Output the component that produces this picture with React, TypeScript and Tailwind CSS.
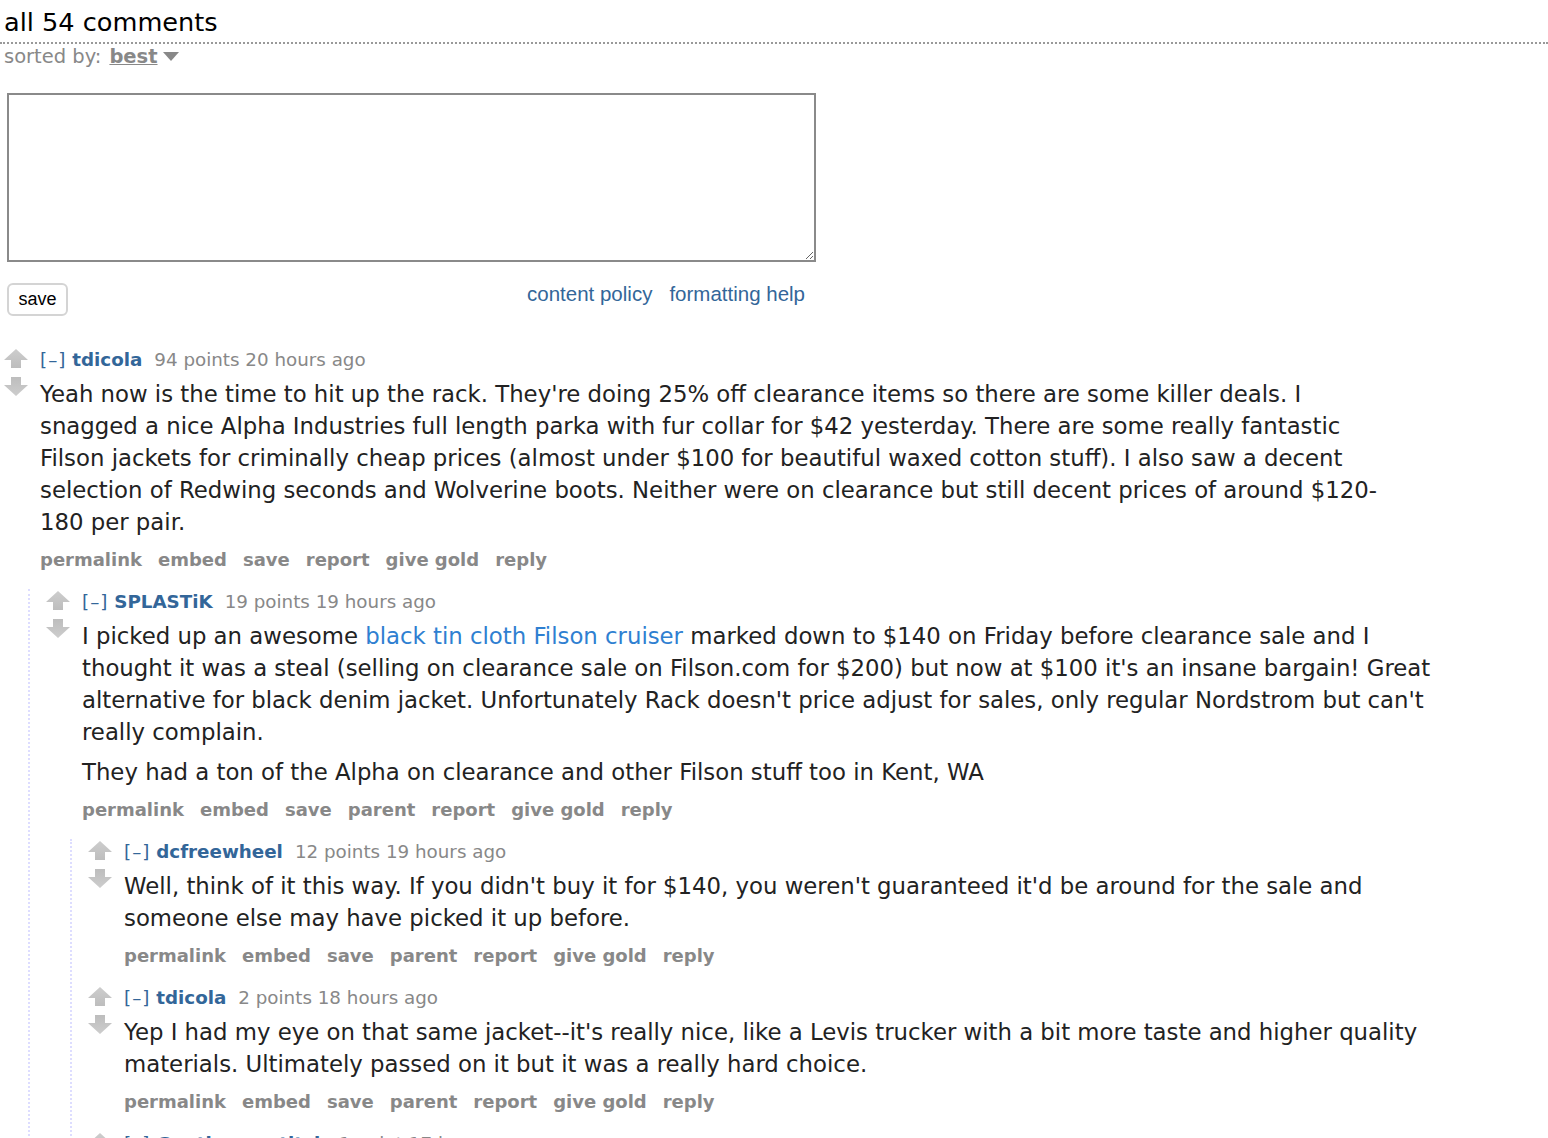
import { Fragment, ReactNode } from "react";

interface CommentData {
  author: string;
  points: string;
  time: string;
  // each paragraph is a list of rendered lines
  body: ReactNode[][];
  child?: boolean;
  replies?: CommentData[];
}

const comments: CommentData[] = [
  {
    author: "tdicola",
    points: "94 points",
    time: "20 hours ago",
    body: [
      [
        "Yeah now is the time to hit up the rack. They're doing 25% off clearance items so there are some killer deals. I",
        "snagged a nice Alpha Industries full length parka with fur collar for $42 yesterday. There are some really fantastic",
        "Filson jackets for criminally cheap prices (almost under $100 for beautiful waxed cotton stuff). I also saw a decent",
        "selection of Redwing seconds and Wolverine boots. Neither were on clearance but still decent prices of around $120-",
        "180 per pair.",
      ],
    ],
    replies: [
      {
        author: "SPLASTiK",
        points: "19 points",
        time: "19 hours ago",
        child: true,
        body: [
          [
            <>
              I picked up an awesome{" "}
              <a href="#" className="text-[#2f7fd1]">
                black tin cloth Filson cruiser
              </a>{" "}
              marked down to $140 on Friday before clearance sale and I
            </>,
            "thought it was a steal (selling on clearance sale on Filson.com for $200) but now at $100 it's an insane bargain! Great",
            "alternative for black denim jacket. Unfortunately Rack doesn't price adjust for sales, only regular Nordstrom but can't",
            "really complain.",
          ],
          ["They had a ton of the Alpha on clearance and other Filson stuff too in Kent, WA"],
        ],
        replies: [
          {
            author: "dcfreewheel",
            points: "12 points",
            time: "19 hours ago",
            child: true,
            body: [
              [
                "Well, think of it this way. If you didn't buy it for $140, you weren't guaranteed it'd be around for the sale and",
                "someone else may have picked it up before.",
              ],
            ],
          },
          {
            author: "tdicola",
            points: "2 points",
            time: "18 hours ago",
            child: true,
            body: [
              [
                "Yep I had my eye on that same jacket--it's really nice, like a Levis trucker with a bit more taste and higher quality",
                "materials. Ultimately passed on it but it was a really hard choice.",
              ],
            ],
          },
          {
            author: "Gentlemanstitch",
            points: "1 point",
            time: "17 hours ago",
            child: true,
            body: [["Thanks for the heads up, going to check mine out this weekend."]],
          },
        ],
      },
    ],
  },
];

function Arrow({ down = false }: { down?: boolean }) {
  return (
    <svg width="24" height="19" viewBox="0 0 24 19" className={down ? "rotate-180" : ""}>
      <defs>
        <linearGradient id={down ? "gd" : "gu"} x1="0" y1="0" x2="0" y2="1">
          <stop offset="0" stopColor="#cdcdcd" />
          <stop offset="1" stopColor="#bdbdbd" />
        </linearGradient>
      </defs>
      <polygon points="12,0 24,11 17,11 17,19 7,19 7,11 0,11" fill={`url(#${down ? "gd" : "gu"})`} />
    </svg>
  );
}

function Comment({ data }: { data: CommentData }) {
  const buttons = data.child
    ? ["permalink", "embed", "save", "parent", "report", "give gold", "reply"]
    : ["permalink", "embed", "save", "report", "give gold", "reply"];

  return (
    <div>
      <div className="flex">
        <div className="w-[40px] shrink-0 pl-[4px] pt-[2px] flex flex-col gap-[9px]">
          <Arrow />
          <Arrow down />
        </div>
        <div className="min-w-0">
          <p className="pt-[1px] text-[18.3px] leading-[24px] text-[#888] whitespace-nowrap">
            <span className="text-[#369] tracking-[1px]">[–]</span>{" "}
            <a href="#" className="font-bold text-[#369]">
              {data.author}
            </a>
            <span className="ml-[12px]">{data.points} {data.time}</span>
          </p>
          <div className="mt-[6px] text-[22.8px] leading-[32px] text-[#222] flex flex-col gap-[8px] whitespace-nowrap">
            {data.body.map((para, i) => (
              <p key={i}>
                {para.map((line, j) => (
                  <Fragment key={j}>
                    {j > 0 && <br />}
                    {line}
                  </Fragment>
                ))}
              </p>
            ))}
          </div>
          <ul className="mt-[10px] flex gap-[16px] text-[18px] leading-[24px] font-bold text-[#888]">
            {buttons.map((b) => (
              <li key={b}>
                <a href="#">{b}</a>
              </li>
            ))}
          </ul>
        </div>
      </div>
      {data.replies && (
        <div className="ml-[28px] mt-[17px] border-l-2 border-dotted border-[#ddf] pl-[12px] flex flex-col gap-[17px]">
          {data.replies.map((r, i) => (
            <Comment key={i} data={r} />
          ))}
        </div>
      )}
    </div>
  );
}

export default function App() {
  return (
    <div className="bg-white min-h-screen overflow-hidden font-['DejaVu_Sans',Verdana,sans-serif] text-[#222]">
      <div className="pt-[7px] pb-[5px] pl-[4px] border-b-2 border-dotted border-[#999]">
        <h1 className="text-[25.6px] leading-[30px] text-black">all 54 comments</h1>
      </div>
      <div className="mt-[1px] pl-[4px] text-[19.5px] leading-[24px] text-[#888] flex items-center">
        <span>sorted by:</span>
        <a href="#" className="ml-[8px] font-bold underline">
          best
        </a>
        <svg width="16" height="10" viewBox="0 0 16 10" className="ml-[5px]">
          <polygon points="0,0 16,0 8,9" fill="#888" />
        </svg>
      </div>

      <form className="mt-[24px] ml-[7px] w-[809px]">
        <textarea className="block w-[809px] h-[169px] border-2 border-[#8a8a8a] bg-white resize-y" />
        <div className="mt-[21px] flex items-start justify-between">
          <button
            type="button"
            className="w-[61px] h-[33px] rounded-[6px] border-2 border-[#d4d4d4] bg-white font-['Liberation_Sans',Arial,sans-serif] text-[18px] text-black"
          >
            save
          </button>
          <div className="mr-[11px] mt-[-1px] flex gap-[17px] font-['Liberation_Sans',Arial,sans-serif] text-[20.5px] leading-[24px] text-[#369]">
            <a href="#">content policy</a>
            <a href="#">formatting help</a>
          </div>
        </div>
      </form>

      <div className="mt-[31px] flex flex-col">
        {comments.map((c, i) => (
          <Comment key={i} data={c} />
        ))}
      </div>
    </div>
  );
}
